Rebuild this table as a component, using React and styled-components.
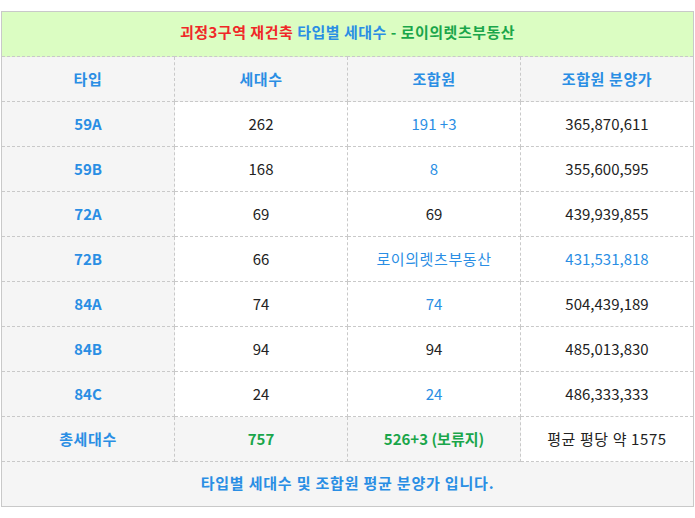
import React from "react";
import styled, { createGlobalStyle } from "styled-components";

const Global = createGlobalStyle`
  html, body { margin: 0; padding: 0; background: #fff; }
  body { font-family: "Noto Sans CJK KR", "Noto Sans", sans-serif; }
`;

const Wrap = styled.div`
  padding: 11px 1px 0 1px;
`;

const Table = styled.table`
  width: 693px;
  border-collapse: collapse;
  table-layout: fixed;
  border: 1px solid #c9c9c9;
  font-size: 15px;
  line-height: 18px;
`;

const Row = styled.tr`
  height: 45px;
`;

const TitleCell = styled.td`
  background: #dbfdc2;
  text-align: center;
  font-weight: 700;
  font-size: 15px;
  letter-spacing: 0.5px;
  border-bottom: 1px dashed #c9c9c9;
  padding: 0 0 4px 0;
`;

const Span = styled.span`
  color: ${(p) => p.$c};
`;

const Cell = styled.td`
  padding: 0 0 1px 0;
  text-align: center;
  border: 1px dashed #c9c9c9;
  background: ${(p) => (p.$gray ? "#f5f5f5" : "#fff")};
  color: ${(p) => p.$color || "#222"};
  font-weight: ${(p) => (p.$bold ? 700 : 400)};
  letter-spacing: ${(p) => (p.$ko ? "0.6px" : "0")};
`;

const FootCell = styled.td`
  padding: 0 0 2px 0;
  text-align: center;
  background: #f5f5f5;
  color: #2a8ee4;
  font-weight: 700;
  letter-spacing: 0.8px;
  border-top: 1px dashed #c9c9c9;
`;

const BLUE = "#2a8ee4";
const GREEN = "#1aa64a";

const rows = [
  ["59A", "262", ["191 +3", BLUE], ["365,870,611"]],
  ["59B", "168", ["8", BLUE], ["355,600,595"]],
  ["72A", "69", ["69"], ["439,939,855"]],
  ["72B", "66", ["로이의렛츠부동산", BLUE, true], ["431,531,818", BLUE]],
  ["84A", "74", ["74", BLUE], ["504,439,189"]],
  ["84B", "94", ["94"], ["485,013,830"]],
  ["84C", "24", ["24", BLUE], ["486,333,333"]],
];

export default function App() {
  return (
    <>
      <Global />
      <Wrap>
        <Table>
          <tbody>
            <Row>
              <TitleCell colSpan={4}>
                <Span $c="#f02828">괴정3구역 재건축</Span>{" "}
                <Span $c={BLUE}>타입별 세대수</Span>{" "}
                <Span $c={GREEN}>- 로이의렛츠부동산</Span>
              </TitleCell>
            </Row>
            <Row>
              <Cell $gray $bold $ko $color={BLUE}>타입</Cell>
              <Cell $gray $bold $ko $color={BLUE}>세대수</Cell>
              <Cell $gray $bold $ko $color={BLUE}>조합원</Cell>
              <Cell $gray $bold $ko $color={BLUE}>조합원 분양가</Cell>
            </Row>
            {rows.map((r) => (
              <Row key={r[0]}>
                <Cell $gray $bold $color={BLUE}>{r[0]}</Cell>
                <Cell>{r[1]}</Cell>
                <Cell $color={r[2][1]} $ko={r[2][2]}>{r[2][0]}</Cell>
                <Cell $color={r[3][1]}>{r[3][0]}</Cell>
              </Row>
            ))}
            <Row>
              <Cell $gray $bold $ko $color={BLUE}>총세대수</Cell>
              <Cell $gray $bold $color={GREEN}>757</Cell>
              <Cell $gray $bold $color={GREEN}>526+3 (보류지)</Cell>
              <Cell $ko>평균 평당 약 1575</Cell>
            </Row>
            <Row>
              <FootCell colSpan={4}>타입별 세대수 및 조합원 평균 분양가 입니다.</FootCell>
            </Row>
          </tbody>
        </Table>
      </Wrap>
    </>
  );
}
